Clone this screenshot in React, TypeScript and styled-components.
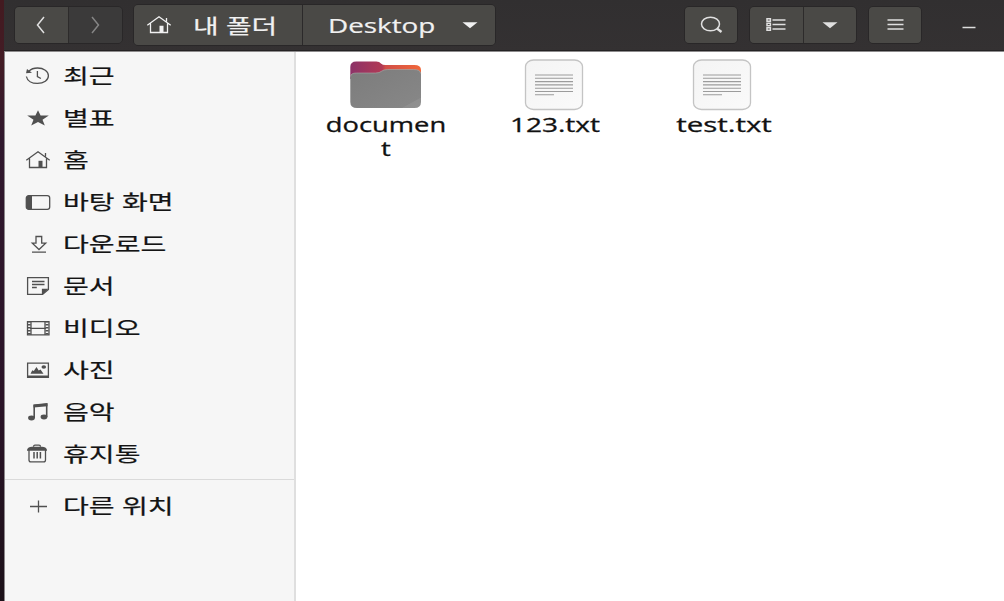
import React from "react";
import styled, { createGlobalStyle } from "styled-components";

const GlobalStyle = createGlobalStyle`
  * { box-sizing: border-box; }
  body { margin: 0; overflow: hidden; background: #fff; }
`;

const Screen = styled.div`
  width: 1004px;
  height: 601px;
  display: flex;
  background: linear-gradient(#431a20 0, #431c25 60px, #30182d 140px, #2b1428 400px, #1c1119 601px);
  padding-left: 4px;
  font-family: "Open Sans", "Noto Sans CJK KR", sans-serif;
`;

const Window = styled.div`
  flex: 1;
  display: flex;
  flex-direction: column;
  border-left: 1px solid #8b878a;
  background: #fff;
`;

const HeaderBar = styled.header`
  height: 52px;
  margin-left: -1px;
  flex: none;
  display: flex;
  align-items: center;
  background: linear-gradient(#312f30, #343132);
  border-bottom: 1px solid #8d8b8c;
  box-shadow: inset 0 -1px #242223;
  padding: 0 28px 2px 10px;
`;

const ButtonGroup = styled.div<{ $gap: number }>`
  display: flex;
  height: 38px;
  margin-right: ${(p) => p.$gap}px;
  border: 1px solid #292728;
  border-radius: 5px;
  overflow: hidden;
`;

const HeaderButton = styled.button<{ $dim?: boolean; $width?: number }>`
  width: ${(p) => p.$width ?? 53}px;
  padding: 0 1px 0 0;
  border: 0;
  display: flex;
  align-items: center;
  justify-content: center;
  color: ${(p) => (p.$dim ? "#858585" : "#e0e0e0")};
  background: ${(p) => (p.$dim ? "#3b3a3a" : "#4a4946")};
  & + & { border-left: 1px solid #2d2b2b; }
`;

const PathBar = styled(ButtonGroup)`
  height: 42px;
`;

const PathSegment = styled.button<{ $width: number; $pad: number }>`
  width: ${(p) => p.$width}px;
  padding: 0 0 0 ${(p) => p.$pad}px;
  border: 0;
  display: flex;
  align-items: center;
  font-family: inherit;
  color: #f1f1f1;
  background: #4a4946;
  & + & { border-left: 1px solid #2b292a; }
`;

const Slot = styled.span<{ $width: number }>`
  width: ${(p) => p.$width}px;
  flex: none;
  display: flex;
`;

const WideText = styled.span<{ $stretch: number; $size?: number }>`
  display: inline-block;
  white-space: nowrap;
  font-size: ${(p) => p.$size ?? 20}px;
  line-height: 24px;
  transform: scaleX(${(p) => p.$stretch});
  transform-origin: left center;
  -webkit-text-stroke: 0.2px currentColor;
`;

const PathLabel = styled(WideText)`
  padding-top: 2px;
`;

const FileName = styled(WideText)`
  width: 92px;
  margin: 2px 0 0;
  color: #111;
  text-align: center;
  white-space: normal;
  word-break: break-all;
  transform-origin: center;
  -webkit-text-stroke-width: 0.3px;
`;

const Spacer = styled.div`
  flex: 1;
`;

const Content = styled.div`
  flex: 1;
  display: flex;
`;

const Sidebar = styled.nav`
  width: 291px;
  padding-top: 4px;
  background: #f6f6f6;
  border-right: 2px solid #dfdfdf;
`;

const Place = styled.div`
  height: 42px;
  display: flex;
  align-items: center;
  padding: 0 0 2px 19px;
  color: #505050;
`;

const PlaceLabel = styled(WideText)`
  color: #141414;
  margin-left: 11px;
`;

const Divider = styled.div`
  height: 1px;
  margin: 3px 0 6px;
  background: #dadada;
`;

const Files = styled.main`
  flex: 1;
  display: flex;
  align-items: flex-start;
  padding: 7px 0 0 6px;
`;

const FileItem = styled.div<{ $shift: number }>`
  width: 168px;
  display: flex;
  flex-direction: column;
  align-items: center;
  ${FileName} { margin-left: ${(p) => p.$shift}px; }
`;

const Glyph = ({ children, w = 28, h = 22 }: { children: React.ReactNode; w?: number; h?: number }) => (
  <svg width={w} height={h} viewBox={`0 0 ${w} ${h}`} fill="none" stroke="currentColor" strokeWidth="1.3">
    {children}
  </svg>
);

const HomeIcon = () => (
  <Glyph>
    <path d="M2.3 11.2 14 2.8l11.7 8.4M5.5 9.5v9h17v-9M21.5 7.5V4" />
    <path d="M14.5 18.5v-6.7h4v6.7z" fill="currentColor" stroke="none" />
  </Glyph>
);

const Caret = () => (
  <Glyph w={16} h={8}>
    <path d="M.5 1.3h15L8 7.2z" fill="currentColor" stroke="none" />
  </Glyph>
);

const places: { name: string; icon: React.ReactNode }[] = [
  {
    name: "최근",
    icon: (
      <Glyph>
        <path d="M2.4 11.5C3.2 16 8 18.4 13.4 18.4c6.5 0 11-3.4 11-7.7S19.7 3 13.6 3C9.8 3 6.7 4.3 4.8 6.2" />
        <path d="m2 8.2 1-4.2 5 3.8z" fill="currentColor" stroke="none" />
        <path d="M13.4 6v5.5l3.5 2" />
      </Glyph>
    ),
  },
  {
    name: "별표",
    icon: (
      <Glyph>
        <path d="m14 3.300 2.600 5.300h8.200l-6.300 4.100 2.300 5.800-6.800-3.500-6.800 3.500 2.300-5.800-6.300-4.100h8.200z" fill="currentColor" stroke="none" />
      </Glyph>
    ),
  },
  { name: "홈", icon: <HomeIcon /> },
  {
    name: "바탕 화면",
    icon: (
      <Glyph>
        <rect x="2.3" y="4.7" width="23.4" height="13.6" rx="2.4" />
        <path d="M8 4.7H4.5Q2.3 4.7 2.3 7v9q0 2.3 2.2 2.3H8z" fill="currentColor" stroke="none" />
      </Glyph>
    ),
  },
  {
    name: "다운로드",
    icon: (
      <Glyph>
        <path d="M12 3.5h5.7v6.7h4L15 16.5l-6.7-6.3H12zM8 19.2h14" />
      </Glyph>
    ),
  },
  {
    name: "문서",
    icon: (
      <Glyph>
        <path d="M3.6 2.7h20.8v11.8l-5.8 4.8h-15z" />
        <path d="M24.4 13.8h-6.5v5.5h1z" fill="currentColor" stroke="none" />
        <path d="M8 6.5h12.5M8 9.5h12.5M8 12.5h4.8" />
      </Glyph>
    ),
  },
  {
    name: "비디오",
    icon: (
      <Glyph>
        <path d="M7 4v14.500M21 4v14.500M3 4.700h22M6 11.300h16M3 17.800h22M3.500 4v14.500M25 4v14.500" />
        <path d="M5.200 4v14.500M23 4v14.500" strokeWidth="3" strokeDasharray="1.600 1.400" />
      </Glyph>
    ),
  },
  {
    name: "사진",
    icon: (
      <Glyph>
        <path d="M3.6 4.2h20.8v14.2H3.6z" />
        <path d="M3 16.5h22v2.5H3zM6.5 14.8l1.8-3.500 1.5.8 2.7-4 2.2 3.500 1.8-1 3 4.200z" fill="currentColor" stroke="none" />
        <ellipse cx="19.800" cy="8" rx="2.300" ry="1.800" fill="currentColor" stroke="none" />
      </Glyph>
    ),
  },
  {
    name: "음악",
    icon: (
      <Glyph>
        <path d="M10.200 17V4.200l12.500-1.300v13" strokeWidth="1.600" />
        <path d="M9.500 3.800 23.500 2.500v2.800L9.500 6.600z" fill="currentColor" stroke="none" />
        <ellipse cx="7.500" cy="17" rx="3.400" ry="2.400" fill="currentColor" stroke="none" />
        <ellipse cx="20" cy="16" rx="3.400" ry="2.400" fill="currentColor" stroke="none" />
      </Glyph>
    ),
  },
  {
    name: "휴지통",
    icon: (
      <Glyph>
        <path d="M5 7v9.900q0 1.900 2 1.900h12.500q2 0 2-1.900V7M9.500 3.800q0-1.600 1.500-1.600h4q1.500 0 1.500 1.600" />
        <path d="M3 6.800q1-3 5-3h10q4 0 5 3v1H3z" fill="currentColor" stroke="none" />
        <path d="M10 9v6.500M13.200 9v6.500M16.400 9v6.500" strokeWidth="1.500" />
      </Glyph>
    ),
  },
];

const FolderIcon = () => (
  <svg width="74" height="52" viewBox="0 0 74 52">
    <defs>
      <linearGradient id="folderBack">
        <stop offset="0" stopColor="#8c3268" />
        <stop offset=".45" stopColor="#b13a55" />
        <stop offset=".5" stopColor="#d14e48" />
        <stop offset="1" stopColor="#f1683a" />
      </linearGradient>
      <linearGradient id="folderFront" x1="0" y1="0" x2="1" y2="1">
        <stop offset="0" stopColor="#7c7c7c" />
        <stop offset=".86" stopColor="#868686" />
        <stop offset=".87" stopColor="#8e8e8e" />
        <stop offset="1" stopColor="#909090" />
      </linearGradient>
    </defs>
    <path d="M1.300 20V8q0-5.500 6-5.500h20q3 0 5 2.200 1.200 1.300 4 1.300h29q6.700 0 6.700 5V22z" fill="url(#folderBack)" />
    <path d="M1.300 17.500q0-3.500 6-3.500h19q4 0 6-1.800 2-1.700 6-1.700h27q6.700 0 6.700 4.500V43q0 6-6.700 6H8q-6.700 0-6.700-6z" fill="url(#folderFront)" />
    <path d="M1.600 17.500q0-3.500 6-3.500h19q4 0 6-1.800 2-1.700 6-1.700h26q6.700 0 7 4" fill="none" stroke="#aaa" strokeWidth=".6" />
  </svg>
);

const TextFileIcon = () => (
  <svg width="60" height="52" viewBox="0 0 60 52">
    <defs>
      <linearGradient id="paper" x1="0" y1="0" x2="1" y2="1">
        <stop offset="0" stopColor="#f4f4f4" />
        <stop offset="1" stopColor="#fafafa" />
      </linearGradient>
    </defs>
    <rect x="1.500" y="1" width="57" height="49.500" rx="8" ry="6.500" fill="url(#paper)" stroke="#c4c4c4" strokeWidth="1.300" />
    <path d="M11 16h38M11 19.300h38M11 22.600h38M11 25.900h38M11 29.200h38M11 32.500h38M11 35.800h19" stroke="#9c9c9c" strokeWidth="1.100" />
  </svg>
);

const files = [
  { name: "document", stretch: 1.365, shift: 0, icon: <FolderIcon /> },
  { name: "123.txt", stretch: 1.4, shift: 1, icon: <TextFileIcon /> },
  { name: "test.txt", stretch: 1.47, shift: 3, icon: <TextFileIcon /> },
];

export default function App() {
  return (
    <Screen>
      <GlobalStyle />
      <Window>
        <HeaderBar>
          <ButtonGroup $gap={10}>
            <HeaderButton>
              <Glyph><path d="M17 3 10.500 11l6.500 8" strokeWidth="1.500" /></Glyph>
            </HeaderButton>
            <HeaderButton $dim $width={54}>
              <Glyph><path d="m11 3 6.500 8-6.500 8" strokeWidth="1.500" /></Glyph>
            </HeaderButton>
          </ButtonGroup>
          <PathBar $gap={0}>
            <PathSegment $width={168} $pad={11}>
              <Slot $width={48}><HomeIcon /></Slot>
              <PathLabel $stretch={1.36} $size={20.5}>내 폴더</PathLabel>
            </PathSegment>
            <PathSegment $width={193} $pad={25}>
              <Slot $width={134}><PathLabel $stretch={1.39}>Desktop</PathLabel></Slot>
              <Caret />
            </PathSegment>
          </PathBar>
          <Spacer />
          <ButtonGroup $gap={11}>
            <HeaderButton $width={52}>
              <Glyph>
                <ellipse cx="13.500" cy="10" rx="9" ry="6.800" strokeWidth="1.500" />
                <path d="m20 14.500 4.500 3.500" strokeWidth="2.300" />
              </Glyph>
            </HeaderButton>
          </ButtonGroup>
          <ButtonGroup $gap={11}>
            <HeaderButton>
              <Glyph>
                <path d="M10.500 6h13M10.500 10.500h13M10.500 15h13" strokeWidth="1.500" />
                <path d="M5 4.700h3.400v2.500H5zM5 9.200h3.400v2.500H5zM5 13.700h3.400v2.500H5z" strokeWidth="1.500" />
              </Glyph>
            </HeaderButton>
            <HeaderButton><Caret /></HeaderButton>
          </ButtonGroup>
          <ButtonGroup $gap={40}>
            <HeaderButton $width={52}>
              <Glyph><path d="M6.500 6h16M6.500 10.500h16M6.500 15h16" strokeWidth="1.500" /></Glyph>
            </HeaderButton>
          </ButtonGroup>
          <Slot $width={14}>
            <Glyph w={14} h={10}><path d="M.5 7.500h13" strokeWidth="1.500" stroke="#ddd" /></Glyph>
          </Slot>
        </HeaderBar>
        <Content>
          <Sidebar>
            {places.map((place) => (
              <Place key={place.name}>
                {place.icon}
                <PlaceLabel $stretch={1.37} $size={20.5}>{place.name}</PlaceLabel>
              </Place>
            ))}
            <Divider />
            <Place>
              <Glyph><path d="M6 11.500h17M14.500 5.500v12" /></Glyph>
              <PlaceLabel $stretch={1.37} $size={20.5}>다른 위치</PlaceLabel>
            </Place>
          </Sidebar>
          <Files>
            {files.map((file) => (
              <FileItem key={file.name} $shift={file.shift}>
                {file.icon}
                <FileName $stretch={file.stretch}>{file.name}</FileName>
              </FileItem>
            ))}
          </Files>
        </Content>
      </Window>
    </Screen>
  );
}
